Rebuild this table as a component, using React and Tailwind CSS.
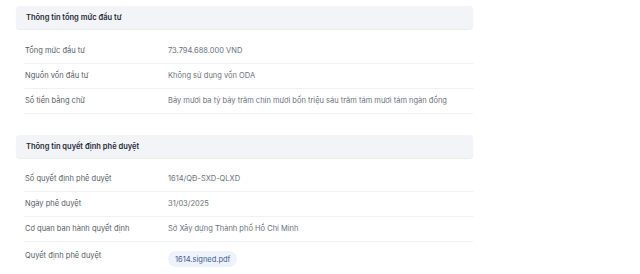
export default function App() {
  const sec1 = [
    ["Tổng mức đầu tư", "73.794.688.000 VND"],
    ["Nguồn vốn đầu tư", "Không sử dụng vốn ODA"],
    ["Số tiền bằng chữ", "Bảy mươi ba tỷ bảy trăm chín mươi bốn triệu sáu trăm tám mươi tám ngàn đồng"],
  ];
  const sec2 = [
    ["Số quyết định phê duyệt", "1614/QĐ-SXD-QLXD"],
    ["Ngày phê duyệt", "31/03/2025"],
    ["Cơ quan ban hành quyết định", "Sở Xây dựng Thành phố Hồ Chí Minh"],
  ];
  const Row = ({ label, value }) => (
    <div className="flex h-[25px] items-start border-b border-[#eef0f3] pt-[5px] leading-[13px]">
      <div className="w-[144px] pl-px text-[#555b66]">{label}</div>
      <div className="text-[#6b717c]">{value}</div>
    </div>
  );
  const Header = ({ title }) => (
    <div className="flex h-[23px] items-center rounded-[4px] bg-[#f2f4f8] pl-[10px] font-semibold text-[#1f2937] shadow-[0_1px_1px_rgba(0,0,0,0.08)]">
      {title}
    </div>
  );
  return (
    <div className="h-[274px] w-[640px] bg-white" style={{ fontFamily: "Inter, 'Noto Sans', sans-serif" }}>
      <div className="w-[457px] ml-4 pt-[6px] text-[7.5px]">
        <Header title="Thông tin tổng mức đầu tư" />
        <div className="ml-2 mt-[10px]">
          {sec1.map(([l, v]) => (
            <Row key={l} label={l} value={v} />
          ))}
        </div>
        <div className="mt-[21px]">
          <Header title="Thông tin quyết định phê duyệt" />
        </div>
        <div className="ml-2 mt-[9px]">
          {sec2.map(([l, v]) => (
            <Row key={l} label={l} value={v} />
          ))}
          <div className="flex items-start pt-[7px] leading-[13px]">
            <div className="w-[144px] pl-px text-[#555b66]">Quyết định phê duyệt</div>
            <div className="mt-[2px] flex h-[16px] items-center rounded-[8px] bg-[#eef2fa] px-[7px] text-[#3f5b95]">
              1614.signed.pdf
            </div>
          </div>
        </div>
      </div>
    </div>
  );
}
